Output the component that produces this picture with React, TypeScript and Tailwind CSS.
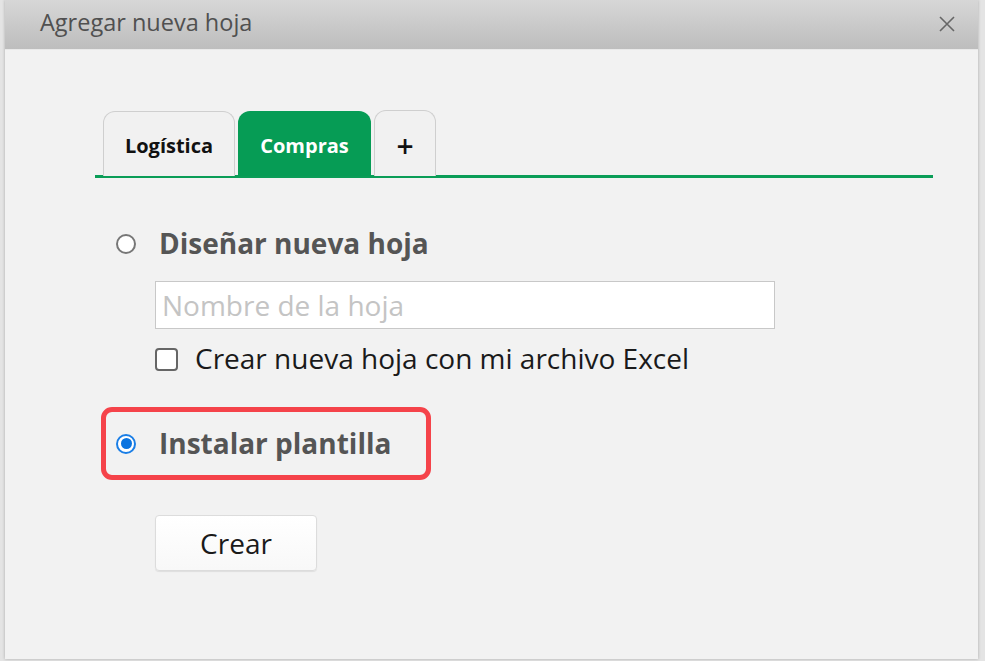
import React from "react";

export default function App() {
  const font = { fontFamily: '"Open Sans", "Noto Sans", sans-serif' };
  return (
    <div className="w-[985px] h-[661px] bg-[#e4e4e4] overflow-hidden" style={font}>
      <div className="ml-[5px] w-[973px] h-[659px] bg-[#f2f2f2] flex flex-col shadow-[0_0_3px_rgba(0,0,0,0.25)]">
        {/* header */}
        <div className="h-[50px] shrink-0 bg-gradient-to-b from-[#d7d7d7] to-[#bdbdbd] border-b border-[#e9e9e9] flex items-center justify-between pl-[35px] pr-[22px]">
          <span className="text-[23.5px] text-[#505050] leading-none -mt-[4px]">Agregar nueva hoja</span>
          <svg width="18" height="18" viewBox="0 0 18 18" className="-mt-[2px]">
            <path d="M2 2 L16 16 M16 2 L2 16" stroke="#666" strokeWidth="1.6" fill="none" />
          </svg>
        </div>
        {/* body */}
        <div className="pl-[90px] pt-[60px] flex flex-col">
          {/* tabs */}
          <div className="w-[838px] flex items-end gap-[3px] pl-[8px] border-b-[3px] border-[#0a9d57]">
            <div className="w-[132px] h-[65px] -mb-[1px] pt-[4px] rounded-t-[12px] border border-b-0 border-[#cfcfcf] bg-[#f1f1f1] flex items-center justify-center text-[20px] font-bold text-[#111]">
              Logística
            </div>
            <div className="w-[133px] h-[65px] -mb-[1px] pt-[4px] rounded-t-[12px] bg-[#069c55] flex items-center justify-center text-[20px] font-bold text-white">
              Compras
            </div>
            <div className="w-[62px] h-[66px] -mb-[1px] pt-[4px] rounded-t-[12px] border border-b-0 border-[#cfcfcf] bg-[#f1f1f1] flex items-center justify-center text-[30px] text-[#111] font-semibold">
              +
            </div>
          </div>

          {/* option 1 */}
          <div className="mt-[48px] h-[36px] flex items-center pl-[21px]">
            <span className="w-[20px] h-[20px] rounded-full border-[2px] border-[#777] bg-white shrink-0" />
            <span className="ml-[23px] text-[28px] font-bold text-[#555] leading-none -mt-[2px]">Diseñar nueva hoja</span>
          </div>

          <div className="mt-[19px] ml-[60px] w-[620px] h-[48px] bg-white border border-[#c8c8c8] flex items-center pl-[6px]">
            <span className="text-[28px] text-[#c4c4c4] leading-none">Nombre de la hoja</span>
          </div>

          <div className="mt-[12px] ml-[60px] h-[36px] flex items-center">
            <span className="w-[23px] h-[23px] rounded-[4px] border-[2px] border-[#666] bg-white shrink-0" />
            <span className="ml-[17px] text-[28px] text-[#1a1a1a] leading-none -mt-[3px]">Crear nueva hoja con mi archivo Excel</span>
          </div>

          {/* option 2 highlighted */}
          <div className="mt-[30px] ml-[6px] w-[330px] h-[73px] border-[5px] border-[#f5434a] rounded-[11px] flex items-center pl-[10px]">
            <span className="w-[20px] h-[20px] rounded-full border-[2px] border-[#1a7ee6] bg-white shrink-0 flex items-center justify-center">
              <span className="w-[11px] h-[11px] rounded-full bg-[#0a74e0]" />
            </span>
            <span className="ml-[23px] text-[28px] font-bold text-[#555] leading-none -mt-[2px]">Instalar plantilla</span>
          </div>

          <div className="mt-[35px] ml-[60px] w-[162px] h-[56px] rounded-[4px] border border-[#dcdcdc] bg-gradient-to-b from-white to-[#f8f8f8] shadow-[0_1px_1px_rgba(0,0,0,0.08)] flex items-center justify-center">
            <span className="text-[28px] text-[#1a1a1a] leading-none">Crear</span>
          </div>
        </div>
      </div>
    </div>
  );
}
